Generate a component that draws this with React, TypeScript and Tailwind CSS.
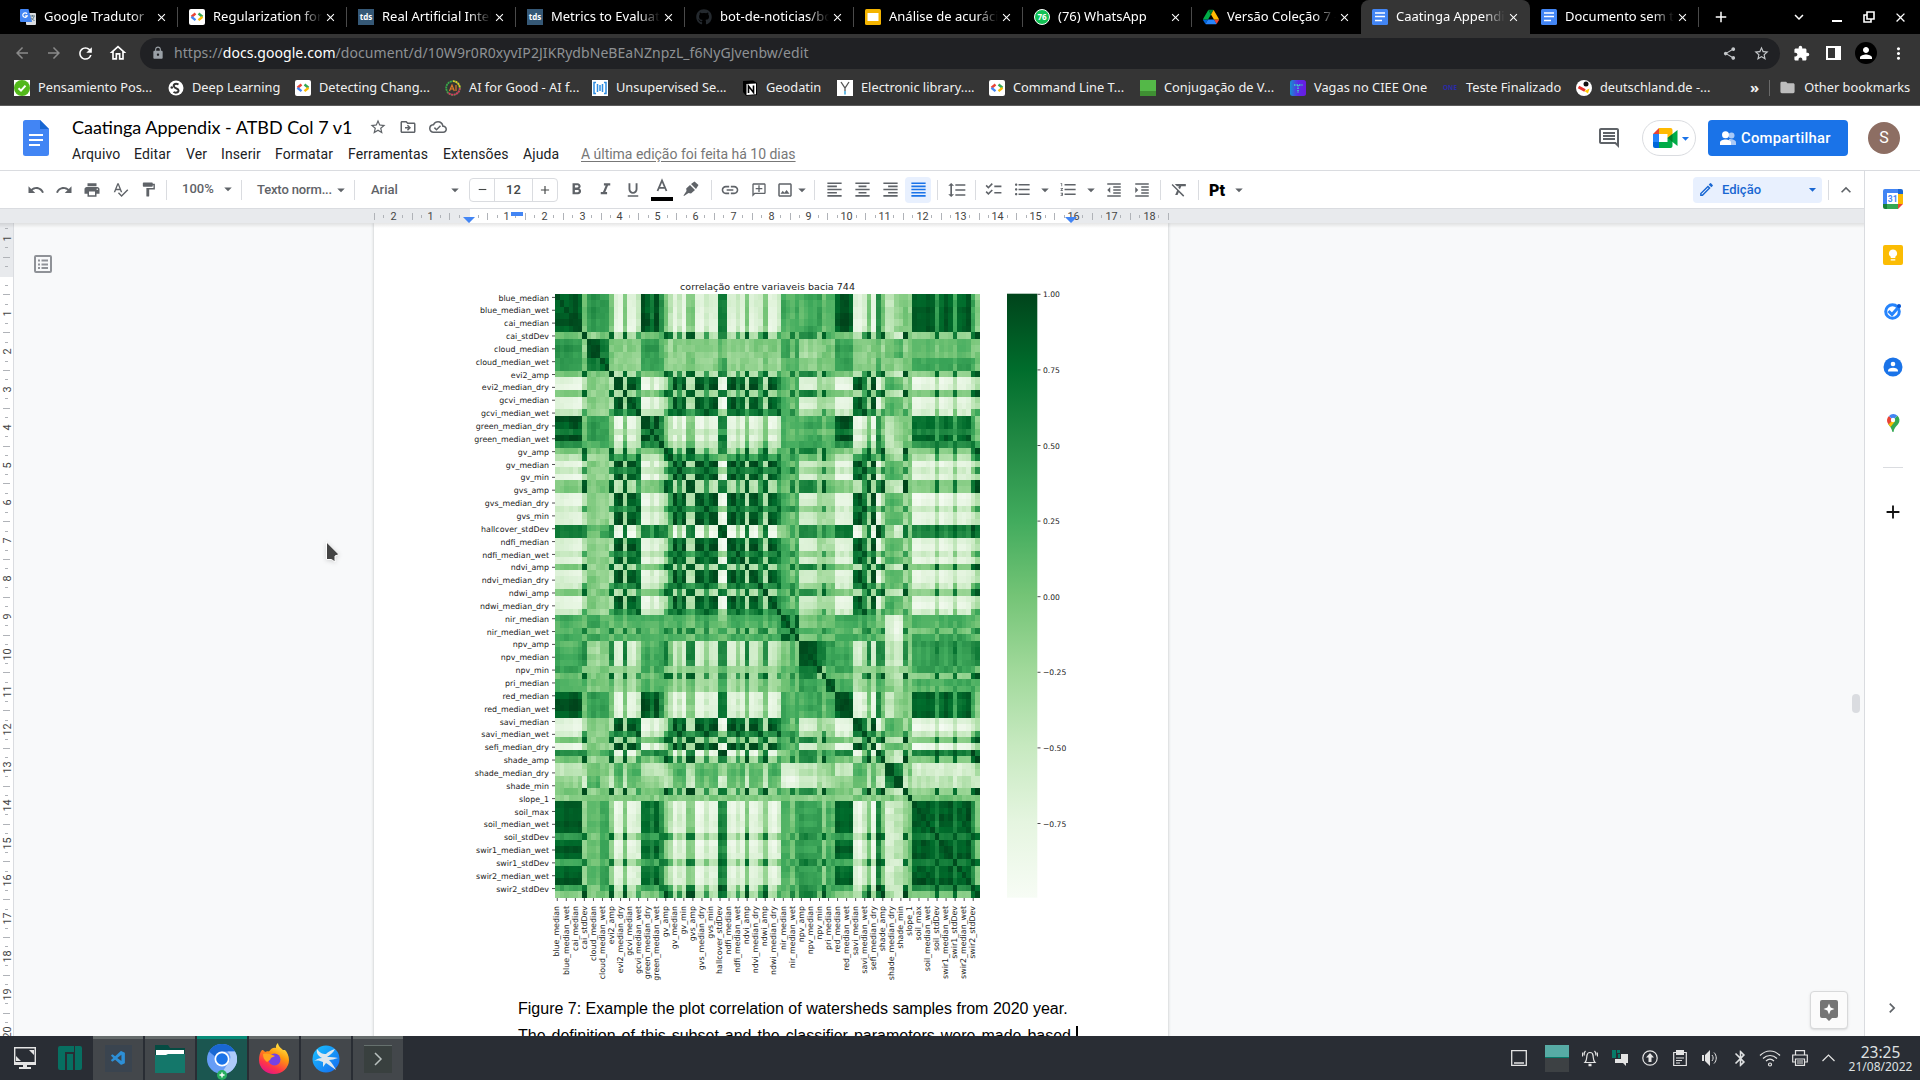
import React from "react";
import {
  MdAdd, MdArrowBack, MdArrowDropDown, MdArrowForward, MdChecklist, MdChevronRight, MdClose, MdExtension, MdFolder,
  MdFormatAlignCenter, MdFormatAlignJustify, MdFormatAlignLeft, MdFormatAlignRight, MdFormatBold, MdFormatClear,
  MdFormatIndentDecrease, MdFormatIndentIncrease, MdFormatItalic, MdFormatLineSpacing, MdFormatListBulleted,
  MdFormatListNumbered, MdFormatPaint, MdFormatUnderlined, MdInsertLink, MdKeyboardArrowDown, MdKeyboardArrowUp,
  MdLock, MdMoreVert, MdOutlineAddComment, MdOutlineCloudDone, MdOutlineDriveFileMove, MdOutlineHome, MdOutlineImage,
  MdOutlineInsertComment, MdOutlineModeEdit, MdPerson, MdPrint, MdRedo, MdRefresh, MdRemove, MdShare,
  MdSpellcheck, MdStarBorder, MdUndo, MdBluetooth,
} from "react-icons/md";
import { FaGithub } from "react-icons/fa";
import { VscVscode } from "react-icons/vsc";

/* ---------- favicons ---------- */

const Svg = ({ children, s = 16, vb = "0 0 16 16" }: { children: React.ReactNode; s?: number; vb?: string }) => (
  <svg width={s} height={s} viewBox={vb} className="shrink-0">{children}</svg>
);

const Translate = () => (
  <Svg>
    <rect x="6" y="4" width="10" height="12" rx="1" fill="#dadce0" />
    <path d="M10 7h5M12.500 6v1.500M14 7.500c-.5 2-2 3.500-3.500 4M11 8.500c.5 1.500 2 2.500 3.500 3" stroke="#5f7a86" fill="none" />
    <path d="M1 0h7.500l3.500 13H1a1 1 0 0 1-1-1V1a1 1 0 0 1 1-1z" fill="#4285f4" />
    <path d="M7 4.800A2.300 2.300 0 1 0 7.300 6.800H5.200" stroke="#fff" strokeWidth="1.200" fill="none" />
  </Svg>
);
const GDev = () => (
  <Svg>
    <rect width="16" height="16" rx="2" fill="#fff" />
    <path d="M6.500 4.500 2.500 7.800" stroke="#ea4335" strokeWidth="2.400" />
    <path d="M2.500 7.800l4 3.400" stroke="#4285f4" strokeWidth="2.400" />
    <path d="M9.500 4.500l4 3.300" stroke="#34a853" strokeWidth="2.400" />
    <path d="M13.500 7.800l-4 3.400" stroke="#fbbc04" strokeWidth="2.400" />
  </Svg>
);
const Tds = () => (
  <span className="flex h-4 w-4 shrink-0 items-center justify-center bg-[#355876] font-['Open_Sans',sans-serif] text-[8px] font-bold leading-none text-white">tds</span>
);
const Slides = () => (
  <Svg><rect width="16" height="16" rx="1.500" fill="#f4b400" /><rect x="2.500" y="4" width="11" height="8" fill="#fff" /></Svg>
);
const Whats = () => (
  <span className="flex h-4 w-4 shrink-0 items-center justify-center rounded-full border border-white bg-[#12c254] text-[8px] font-bold leading-none text-white">76</span>
);
const Drive = () => (
  <Svg vb="0 0 87.300 78">
    <path d="m6.600 66.850 3.850 6.650c.8 1.400 1.950 2.500 3.300 3.300l13.750-23.800H0c0 1.550.4 3.100 1.200 4.500z" fill="#0066da" />
    <path d="m43.650 25-13.750-23.800c-1.350.8-2.500 1.900-3.300 3.300l-25.400 44a9 9 0 0 0-1.200 4.500h27.500z" fill="#00ac47" />
    <path d="m73.550 76.800c1.350-.8 2.500-1.900 3.300-3.300l1.600-2.750 7.650-13.250c.8-1.400 1.200-2.950 1.200-4.500H59.800l5.850 11.500z" fill="#ea4335" />
    <path d="m43.650 25 13.750-23.800c-1.350-.8-2.900-1.200-4.500-1.200H34.400c-1.600 0-3.150.45-4.500 1.200z" fill="#00832d" />
    <path d="M59.800 53H27.500L13.750 76.800c1.350.8 2.900 1.200 4.500 1.200h50.800c1.600 0 3.150-.45 4.500-1.200z" fill="#2684fc" />
    <path d="m73.400 26.500-12.700-22c-.8-1.400-1.950-2.500-3.300-3.300L43.650 25 59.800 53h27.450c0-1.550-.4-3.100-1.200-4.500z" fill="#ffba00" />
  </Svg>
);
const DocFav = () => (
  <Svg>
    <rect width="16" height="16" rx="1.500" fill="#4285f4" />
    <path d="M3 4h10M3 7.500h10M3 11.500h7" stroke="#fff" strokeWidth="1.600" />
  </Svg>
);

/* ---------- browser frame ---------- */

const tabs: { icon: React.ReactNode; title: string; active?: boolean; noSep?: boolean }[] = [
  { icon: <Translate />, title: "Google Tradutor" },
  { icon: <GDev />, title: "Regularization for S" },
  { icon: <Tds />, title: "Real Artificial Intell" },
  { icon: <Tds />, title: "Metrics to Evaluate" },
  { icon: <FaGithub size={16} color="#24292e" className="shrink-0" />, title: "bot-de-noticias/bot" },
  { icon: <Slides />, title: "Análise de acurácia" },
  { icon: <Whats />, title: "(76) WhatsApp" },
  { icon: <Drive />, title: "Versão Coleção 7 -", noSep: true },
  { icon: <DocFav />, title: "Caatinga Appendix", active: true, noSep: true },
  { icon: <DocFav />, title: "Documento sem tít" },
];

const TabStrip = () => (
  <div className="flex h-[34px] items-stretch bg-black pl-[9px] text-white">
    {tabs.map((t, i) => (
      <div key={i} className={"flex w-[169px] shrink-0 items-center pl-[11px] " + (t.active ? "rounded-t-lg bg-[#353535]" : "")}>
        {t.icon}
        <span className="ml-2 w-[109px] overflow-hidden whitespace-nowrap text-[13px] [mask-image:linear-gradient(to_right,#000_80%,transparent)]">{t.title}</span>
        <MdClose size={13} className="ml-[2px] shrink-0" />
        <span className={"ml-auto h-5 w-px " + (t.noSep ? "" : "bg-[#4a4a4a]")} />
      </div>
    ))}
    <div className="flex flex-1 items-center">
      <MdAdd size={18} className="ml-[13px]" />
      <MdKeyboardArrowDown size={18} className="ml-[60px]" />
      <svg width="12" height="12" className="ml-[23px]"><path d="M1 10h10" stroke="#fff" strokeWidth="2" /></svg>
      <svg width="12" height="12" className="ml-[20px]"><path d="M4 1h7v7H4zM8 8v3H1V4h3" stroke="#fff" strokeWidth="1.600" fill="none" /></svg>
      <MdClose size={15} className="ml-[18px]" />
    </div>
  </div>
);

const AddressBar = () => (
  <div className="flex h-[38px] items-center bg-[#353535] pl-[13px] text-white">
    <MdArrowBack size={18} className="text-[#8a8a8a]" />
    <MdArrowForward size={18} className="ml-[14px] text-[#8a8a8a]" />
    <MdRefresh size={19} className="ml-[13px]" />
    <MdOutlineHome size={20} className="ml-[13px]" />
    <div className="ml-[12px] flex h-[31px] w-[1640px] items-center rounded-full bg-[#202124] pl-[11px] text-[14px] text-[#8e9194]">
      <MdLock size={14} className="text-[#9aa0a6]" />
      <span className="-mt-px ml-[9px] whitespace-nowrap tracking-[0.060px]">
        https://<span className="text-white">docs.google.com</span>/document/d/10W9r0R0xyvIP2JIKRydbNeBEaNZnpzL_f6NyGJvenbw/edit
      </span>
      <MdShare size={15} className="ml-auto text-[#c4c7ca]" />
      <MdStarBorder size={17} className="ml-4 mr-[10px] text-[#c4c7ca]" />
    </div>
    <MdExtension size={17} className="ml-[13px]" />
    <svg width="15" height="14" className="ml-[16px]"><path d="M1 1h13v12H1z" stroke="#fff" strokeWidth="2" fill="none" /><path d="M9 1h5v12H9z" fill="#fff" /></svg>
    <span className="ml-[14px] flex h-[22px] w-[22px] items-center justify-center rounded-full bg-black"><MdPerson size={18} /></span>
    <MdMoreVert size={19} className="ml-[12px]" />
  </div>
);

const bookmarks: { w: string; title: string; icon: React.ReactNode }[] = [
  { w: "w-[154px]", title: "Pensamiento Pos...", icon: <Svg><rect width="16" height="16" fill="#fff" /><circle cx="8" cy="8" r="8" fill="#52b81a" /><path d="M4.500 8.200l2.500 2.400 4.500-5" stroke="#fff" strokeWidth="2" fill="none" /></Svg> },
  { w: "w-[127px]", title: "Deep Learning", icon: <Svg><circle cx="8" cy="8" r="7.500" fill="#fff" /><path d="M10.500 4.500C8 3 5 4 6 6.500s4.500 1.500 4.500 4-3.500 2.500-5 1.500" stroke="#333" strokeWidth="2" fill="none" /><circle cx="3.800" cy="7.500" r="1.300" fill="#333" /></Svg> },
  { w: "w-[150px]", title: "Detecting Chang...", icon: <GDev /> },
  { w: "w-[147px]", title: "AI for Good - AI f...", icon: <Svg><circle cx="8" cy="8" r="6.800" fill="none" stroke="#39a949" strokeWidth="1.800" strokeDasharray="2 .6" /><path d="M8 1.200A6.800 6.800 0 0 1 14.800 8" stroke="#e6c229" strokeWidth="1.800" fill="none" strokeDasharray="2 .6" /><path d="M14.800 8A6.800 6.800 0 0 1 3 12.500" stroke="#d8345f" strokeWidth="1.800" fill="none" strokeDasharray="2 .6" /><path d="M4.500 11 7 5l2.300 6M5.500 9h3M11 5v6" stroke="#e07b28" strokeWidth="1.200" fill="none" /></Svg> },
  { w: "w-[150px]", title: "Unsupervised Se...", icon: <Svg><rect width="16" height="16" fill="#fff" /><path d="M4 2.500H2v11h2M12 2.500h2v11h-2M5.500 4v8M8 5v6M10.500 4v8" stroke="#2d8ce0" strokeWidth="1.500" fill="none" /></Svg> },
  { w: "w-[95px]", title: "Geodatin", icon: <Svg><path d="M1 1l10-.5L15 3v12l-11 .8L1 12z" fill="#000" /><path d="M4.500 4l9.500-.6v10.800L4.500 15z" fill="#fff" /><path d="M6.500 13V6l5 6.500V5.500" stroke="#000" strokeWidth="1.600" fill="none" /></Svg> },
  { w: "w-[152px]", title: "Electronic library....", icon: <Svg><rect width="16" height="16" fill="#fff" /><path d="M4 2l4 6 4-6M8 8v3" stroke="#555" strokeWidth="1.300" fill="none" /><path d="M8 11v3.500" stroke="#3aa6dd" strokeWidth="1.500" /></Svg> },
  { w: "w-[151px]", title: "Command Line T...", icon: <GDev /> },
  { w: "w-[150px]", title: "Conjugação de V...", icon: <Svg><rect width="16" height="16" fill="#54b848" /><rect y="11" width="16" height="5" fill="#3f8f33" /></Svg> },
  { w: "w-[152px]", title: "Vagas no CIEE One", icon: <Svg><defs><linearGradient id="ciee"><stop stopColor="#1590d0" /><stop offset=".5" stopColor="#5a2be8" /><stop offset="1" stopColor="#6a1be0" /></linearGradient></defs><rect width="16" height="16" rx="2.500" fill="url(#ciee)" /><path d="M4 5h8.500M8 5v8" stroke="#3ce0c0" strokeWidth="1.500" strokeDasharray="1.500 1" /></Svg> },
  { w: "w-[134px]", title: "Teste Finalizado", icon: <span className="flex h-4 w-4 shrink-0 items-center justify-center text-[6.500px] font-bold text-[#2a2aa8]">ONE</span> },
  { w: "w-[150px]", title: "deutschland.de -...", icon: <Svg><circle cx="8" cy="8" r="8" fill="#fff" /><circle cx="10" cy="4" r="2.500" fill="#111" /><path d="M2.500 7 9 10.500" stroke="#e8302a" strokeWidth="3" /><path d="M8.500 11l5-2.500-1.500 5z" fill="#fc0" /></Svg> },
];

const BookmarkBar = () => (
  <div className="flex h-[34px] items-center border-b border-[#5b5b5b] bg-[#353535] pb-[2px] pl-[14px] text-[12.800px] text-[#f1f1f1]">
    {bookmarks.map((b, i) => (
      <div key={i} className={"flex shrink-0 items-center gap-2 whitespace-nowrap " + b.w}>
        {b.icon}
        <span>{b.title}</span>
      </div>
    ))}
    <span className="ml-[24px] text-[15px] font-bold leading-none">»</span>
    <span className="ml-[10px] h-4 w-px bg-[#6a6a6a]" />
    <MdFolder size={17} className="ml-[9px] text-[#bdbdbd]" />
    <span className="ml-[8px] whitespace-nowrap">Other bookmarks</span>
  </div>
);

/* ---------- document header ---------- */

const menus: [string, string][] = [
  ["Arquivo", "w-[62px]"], ["Editar", "w-[52px]"], ["Ver", "w-[35px]"], ["Inserir", "w-[54px]"],
  ["Formatar", "w-[73px]"], ["Ferramentas", "w-[95px]"], ["Extensões", "w-[80px]"], ["Ajuda", "w-[58px]"],
];

const MeetLogo = () => (
  <svg width="25" height="20" viewBox="0 0 25 20">
    <path d="M6 0v6H0z" fill="#ea4335" />
    <path d="M6 0h11.500a2 2 0 0 1 2 2v5l-5 3V6H6z" fill="#ffba00" />
    <path d="M0 6h6v8H0z" fill="#2684fc" />
    <path d="M0 14h6v6H2a2 2 0 0 1-2-2z" fill="#0066da" />
    <path d="M6 14h8.500v-4l5 3v5a2 2 0 0 1-2 2H6z" fill="#00ac47" />
    <path d="M14.500 10 24.500 2v16z" fill="#00ac47" />
    <path d="M14.500 10l5-4v8z" fill="#00832d" />
  </svg>
);

const DocHeader = () => (
  <div className="flex h-[65px] border-b border-[#dadce0] bg-white pl-[23px]">
    <svg width="26" height="36" viewBox="0 0 26 36" className="mt-[14px]">
      <path d="M2.500 0H17l9 9v24.500a2.500 2.500 0 0 1-2.500 2.500h-21A2.500 2.500 0 0 1 0 33.500v-31A2.500 2.500 0 0 1 2.500 0z" fill="#4285f4" />
      <path d="M17 0l9 9h-9z" fill="#1967d2" />
      <path d="M6 15h14M6 20h14M6 25h11" stroke="#fff" strokeWidth="2" />
    </svg>
    <div className="ml-[23px] flex flex-col">
      <div className="mt-[9px] flex h-6 items-center">
        <span className="w-[295px] whitespace-nowrap font-['Lato',sans-serif] text-[18px] text-black">Caatinga Appendix - ATBD Col 7 v1</span>
        <MdStarBorder size={18} className="ml-[2px] text-[#5f6368]" />
        <MdOutlineDriveFileMove size={18} className="ml-[12px] text-[#5f6368]" />
        <MdOutlineCloudDone size={18} className="ml-[12px] text-[#5f6368]" />
      </div>
      <div className="mt-[5px] flex h-5 items-center whitespace-nowrap font-['Roboto',sans-serif] text-[14px] tracking-[0.120px] text-[#202124]">
        {menus.map(([m, w]) => <span key={m} className={w}>{m}</span>)}
        <span className="text-[14px] tracking-[-0.020px] text-[#777] underline underline-offset-2">A última edição foi feita há 10 dias</span>
      </div>
    </div>
    <div className="ml-auto mt-[14px] flex h-9 items-center pr-5">
      <MdOutlineInsertComment size={24} className="mr-[21px] text-[#5f6368]" />
      <div className="mr-3 flex h-9 w-[54px] items-center rounded-full border border-[#dadce0] pl-[10px]">
        <MeetLogo />
        <MdArrowDropDown size={17} className="-ml-px -mr-2 text-[#1a73e8]" />
      </div>
      <div className="mr-5 flex h-9 w-[140px] items-center rounded bg-[#1a73e8] pl-[12px] font-['Roboto',sans-serif] text-[14.800px] font-medium tracking-[0.250px] text-white">
        <svg width="16" height="14" className="mr-[5px]"><circle cx="11.500" cy="4.500" r="3" fill="#a9c9f7" /><path d="M9 8c4 0 7 1.500 7 3.500V14H9z" fill="#a9c9f7" /><circle cx="5.500" cy="3.800" r="3.500" fill="#fff" /><path d="M0 11.500C0 9.500 3 8.500 5.500 8.500S11 9.500 11 11.500V14H0z" fill="#fff" /></svg>
        Compartilhar
      </div>
      <span className="flex h-8 w-8 items-center justify-center rounded-full bg-[#8d6e63] font-['Roboto',sans-serif] text-[16px] text-white">S</span>
    </div>
  </div>
);

/* ---------- toolbar ---------- */

const Slot = ({ w, children, className = "" }: { w: string; children?: React.ReactNode; className?: string }) => (
  <div className={"flex h-[26px] shrink-0 items-center justify-center " + w + " " + className}>{children}</div>
);
const Sep = ({ w = "w-2" }: { w?: string }) => (
  <Slot w={w}><span className="h-5 w-px bg-[#dadce0]" /></Slot>
);
const Caret = () => <MdArrowDropDown size={18} className="shrink-0" />;

const Toolbar = () => (
  <div className="flex h-[38px] items-center border-b border-[#dadce0] bg-white pl-[22px] font-['Roboto',sans-serif] text-[13px] font-medium text-[#5f6368]">
    <Slot w="w-7"><MdUndo size={18} /></Slot>
    <Slot w="w-7"><MdRedo size={18} /></Slot>
    <Slot w="w-7"><MdPrint size={18} /></Slot>
    <Slot w="w-7"><MdSpellcheck size={17} /></Slot>
    <Slot w="w-[28px]"><MdFormatPaint size={17} /></Slot>
    <Sep w="w-[9px]" />
    <Slot w="w-[66px]" className="!justify-between pb-px pl-[11px]">100%<Caret /></Slot>
    <Sep />
    <Slot w="w-[104px]" className="!justify-between whitespace-nowrap pl-3 tracking-[-0.150px]">Texto norm...<Caret /></Slot>
    <Sep w="w-[10px]" />
    <Slot w="w-[110px]" className="!justify-between pl-3 pr-[5px]">Arial<Caret /></Slot>
    <div className="flex h-6 w-[89px] items-center rounded-sm border border-[#dadce0] text-[#444746]">
      <span className="flex w-[24px] justify-center"><MdRemove size={13} /></span>
      <span className="flex h-full flex-1 items-center justify-center border-x border-[#dadce0]">12</span>
      <span className="flex w-[24px] justify-center"><MdAdd size={14} /></span>
    </div>
    <Slot w="w-[36px]"><MdFormatBold size={19} /></Slot>
    <Slot w="w-[22px]"><MdFormatItalic size={19} /></Slot>
    <Slot w="w-[34px]"><MdFormatUnderlined size={18} /></Slot>
    <Slot w="w-[24px]">
      <svg width="22" height="23"><path d="M6.500 13 11 2.500 15.500 13M8 9.800h6" stroke="#5f6368" strokeWidth="1.800" fill="none" /><path d="M0 19h22v4H0z" fill="#000" /></svg>
    </Slot>
    <Slot w="w-[34px]">
      <svg width="16" height="18"><path d="M8 3l3.500-2.500 4 3.500L13 8zM7 4l5 5-4 3.500-2.500-.5L1 15l-.5-.5 3-4.500-.3-2.500z" fill="#5f6368" /></svg>
    </Slot>
    <Sep w="w-[6px]" />
    <Slot w="w-[31px]"><MdInsertLink size={20} /></Slot>
    <Slot w="w-[27px]"><MdOutlineAddComment size={16} className="-scale-x-100" /></Slot>
    <Slot w="w-[26px]"><MdOutlineImage size={18} /></Slot>
    <Slot w="w-[14px]" className="-ml-[3px]"><Caret /></Slot>
    <Sep w="w-[11px]" />
    <Slot w="w-[28px]"><MdFormatAlignLeft size={19} /></Slot>
    <Slot w="w-[28px]"><MdFormatAlignCenter size={19} /></Slot>
    <Slot w="w-[29px]"><MdFormatAlignRight size={19} /></Slot>
    <Slot w="w-[26px]" className="rounded-sm bg-[#e8f0fe] text-[#1a73e8]"><MdFormatAlignJustify size={19} /></Slot>
    <Sep w="w-[12px]" />
    <Slot w="w-[28px]"><MdFormatLineSpacing size={20} /></Slot>
    <Sep w="w-[8px]" />
    <Slot w="w-[29px]"><MdChecklist size={19} /></Slot>
    <Slot w="w-[29px]"><MdFormatListBulleted size={19} /></Slot>
    <Slot w="w-[15px]"><Caret /></Slot>
    <Slot w="w-[33px]"><MdFormatListNumbered size={19} /></Slot>
    <Slot w="w-[11px]"><Caret /></Slot>
    <Slot w="w-[35px]"><MdFormatIndentDecrease size={18} /></Slot>
    <Slot w="w-[22px]"><MdFormatIndentIncrease size={18} /></Slot>
    <Sep w="w-[14px]" />
    <Slot w="w-[24px]"><MdFormatClear size={19} /></Slot>
    <Sep w="w-[14px]" />
    <Slot w="w-[24px]" className="pt-[3px] font-['Roboto',sans-serif] text-[16px] font-black text-black">Pt</Slot>
    <Slot w="w-[20px]"><Caret /></Slot>
    <div className="ml-auto flex items-center">
      <div className="flex h-[26px] w-[129px] items-center rounded bg-[#e8f0fe] pl-[5px] pr-px text-[#1967d2]">
        <MdOutlineModeEdit size={17} />
        <span className="ml-[7px]">Edição</span>
        <MdArrowDropDown size={17} className="ml-auto" />
      </div>
      <Sep w="w-[12px]" />
      <Slot w="w-[30px]" className="pr-[6px]"><MdKeyboardArrowUp size={20} /></Slot>
    </div>
  </div>
);

/* ---------- rulers ---------- */

const CM = 37.8;
const range = (a: number, b: number) => Array.from({ length: b - a + 1 }, (_, i) => a + i);

const HRuler = () => {
  const zero = 468.2;
  return (
    <svg width="1864" height="14" className="block bg-[#e8eaed]">
      <rect x="470" width="600.500" height="14" fill="#fff" />
      {range(-10, 74).map((q) => {
        const x = Math.round(zero + (q * CM) / 4) + 0.5;
        if (q % 4 === 0) {
          return q === 0 ? null : (
            <text key={q} x={x} y="11" textAnchor="middle" fontSize="10.800" fill="#444" fontFamily="Roboto">{Math.abs(q / 4)}</text>
          );
        }
        return q % 2 === 0
          ? <path key={q} d={`M${x} 4v7`} stroke="#b0b3b8" />
          : <path key={q} d={`M${x} 6v3`} stroke="#b0b3b8" />;
      })}
      <path d="M463 8h12l-6 6zM1065 8h12l-6 6zM511 3h12v4h-12z" fill="#4285f4" />
    </svg>
  );
};

const VRuler = () => {
  const zero = 52.5;
  return (
    <svg width="14" height="813" className="block shrink-0 bg-white">
      <rect width="14" height="54" fill="#e8eaed" />
      <path d="M13.500 0v813" stroke="#dadce0" />
      {range(-5, 81).map((q) => {
        const y = Math.round(zero + (q * CM) / 4) + 0.5;
        if (q % 4 === 0) {
          return q === 0 ? null : (
            <text key={q} transform={`translate(11 ${y}) rotate(-90)`} textAnchor="middle" fontSize="10.800" fill="#444" fontFamily="Roboto">{Math.abs(q / 4)}</text>
          );
        }
        return q % 2 === 0
          ? <path key={q} d={`M3 ${y}h7`} stroke="#b0b3b8" />
          : <path key={q} d={`M5 ${y}h3`} stroke="#b0b3b8" />;
      })}
    </svg>
  );
};

/* ---------- correlation heat map ---------- */

const labels = [
  "blue_median", "blue_median_wet", "cai_median", "cai_stdDev", "cloud_median", "cloud_median_wet", "evi2_amp",
  "evi2_median_dry", "gcvi_median", "gcvi_median_wet", "green_median_dry", "green_median_wet", "gv_amp", "gv_median",
  "gv_min", "gvs_amp", "gvs_median_dry", "gvs_min", "hallcover_stdDev", "ndfi_median", "ndfi_median_wet", "ndvi_amp",
  "ndvi_median_dry", "ndwi_amp", "ndwi_median_dry", "nir_median", "nir_median_wet", "npv_amp", "npv_median", "npv_min",
  "pri_median", "red_median", "red_median_wet", "savi_median", "savi_median_wet", "sefi_median_dry", "shade_amp",
  "shade_median_dry", "shade_min", "slope_1", "soil_max", "soil_median_wet", "soil_stdDev", "swir1_median_wet",
  "swir1_stdDev", "swir2_median_wet", "swir2_stdDev",
];

/* One letter per variable: the family whose members correlate alike. */
const families =
  "AAAAAAPCCCccPVVPVVMAABAGPKVMVPPVVMVVHHVVMVPVVMPVVMNNnNQQQQqPRRAAAAVVMPVHPSSTTPLWWWWWDWWWDWWWDP";

const order = "ABGCcPVMKHNnQqRSTLWD";
/* Upper triangle of family-to-family correlations, 0 to 99. */
const table = [
  /* A */ [95, 80, 72, 70, 72, 47, 11, 22, 32, 80, 61, 58, 62, 64, 58, 27, 40, 44, 89, 64],
  /* B */ [97, 74, 66, 66, 42, 20, 28, 34, 66, 60, 54, 56, 58, 54, 30, 36, 50, 76, 62],
  /* G */ [97, 62, 62, 60, 26, 36, 44, 82, 62, 66, 70, 60, 60, 26, 32, 50, 72, 80],
  /* C */ [91, 84, 44, 44, 42, 42, 50, 60, 52, 38, 44, 46, 54, 62, 50, 56, 48],
  /* c */ [90, 45, 42, 41, 42, 62, 60, 56, 46, 52, 54, 44, 46, 50, 62, 60],
  /* P */ [96, 34, 68, 82, 80, 50, 76, 78, 48, 56, 34, 26, 46, 46, 84],
  /* V */ [95, 80, 66, 9, 60, 46, 23, 34, 32, 60, 54, 46, 10, 26],
  /* M */ [96, 84, 38, 62, 74, 38, 40, 44, 56, 46, 46, 20, 48],
  /* K */ [97, 56, 60, 76, 52, 40, 44, 42, 34, 46, 28, 62],
  /* H */ [97, 48, 58, 78, 50, 60, 36, 22, 47, 78, 94],
  /* N */ [97, 72, 50, 56, 52, 18, 8, 44, 62, 58],
  /* n */ [97, 62, 54, 58, 20, 6, 44, 52, 72],
  /* Q */ [98, 78, 66, 28, 26, 44, 68, 78],
  /* q */ [97, 60, 42, 34, 44, 66, 64],
  /* R */ [96, 44, 36, 50, 58, 64],
  /* S */ [94, 84, 44, 22, 20],
  /* T */ [98, 42, 32, 22],
  /* L */ [99, 46, 47],
  /* W */ [92, 76],
  /* D */ [97],
];
const greens = [
  [247, 252, 245], [229, 245, 224], [199, 233, 192], [161, 217, 155], [116, 196, 118],
  [65, 171, 93], [35, 139, 69], [0, 109, 44], [0, 68, 27],
];
const noise = (a: number, b: number) => {
  const s = Math.sin(a * 12.989 + b * 78.233) * 43758.545;
  return s - Math.floor(s) - 0.5;
};
const shade = (r: number, c: number) => {
  const i = Math.min(r, c);
  const j = Math.max(r, c);
  const a = order.indexOf(families[i]);
  const b = order.indexOf(families[j]);
  const lo = Math.min(a, b);
  const base = i === j ? 98 : table[lo][Math.max(a, b) - lo];
  const spread = families[i] === "W" && families[j] === "W" ? 10 : 3;
  const ja = i === j ? 0 : noise(i, b + 3) * 9 + noise(j, a + 3) * 9 + noise(i, j) * spread;
  const t = Math.max(0.02, Math.min(1, (base + ja) / 100)) * 8;
  const k = Math.min(7, Math.floor(t));
  const m = greens[k].map((v, n) => Math.round(v + (greens[k + 1][n] - v) * (t - k)));
  return `rgb(${m.join(",")})`;
};

const N = 94;
const CW = 425 / N;
const CH = 604 / N;

const Chart = () => (
  <svg width="600" height="710" viewBox="474 277 600 710" className="block" fontFamily="DejaVu Sans" fill="#222">
    <defs>
      <linearGradient id="bar" x1="0" y1="1" x2="0" y2="0">
        {greens.map((g, i) => <stop key={i} offset={i / 8} stopColor={`rgb(${g.join(",")})`} />)}
      </linearGradient>
    </defs>
    <text x="767.500" y="289.500" textAnchor="middle" fontSize="9.500" textLength="175">correlação entre variaveis bacia 744</text>
    <g shapeRendering="crispEdges">
      {range(0, N - 1).map((r) => range(0, N - 1).map((c) => (
        <rect key={r * N + c} x={555 + c * CW} y={293.7 + r * CH} width={CW + 0.2} height={CH + 0.2} fill={shade(r, c)} />
      )))}
    </g>
    {labels.map((l, i) => {
      const y = 293.7 + (2 * i + 0.5) * CH;
      const x = 555 + (2 * i + 0.5) * CW;
      return (
        <g key={l} fontSize="7.900">
          <text x="549" y={y + 3.6} textAnchor="end">{l}</text>
          <path d={`M552 ${y + 0.5}h3M${x} 898v3`} stroke="#222" strokeWidth=".8" />
          <text transform={`translate(${x + 2.2} 906) rotate(-90)`} textAnchor="end">{l}</text>
        </g>
      );
    })}
    <rect x="1007" y="293.700" width="30.300" height="604" fill="url(#bar)" />
    {["1.00", "0.75", "0.50", "0.25", "0.00", "−0.25", "−0.50", "−0.75"].map((t, i) => (
      <g key={t} fontSize="7.600">
        <path d={`M1037.500 ${294.3 + i * 75.6}h3`} stroke="#222" strokeWidth=".8" />
        <text x="1043" y={297.4 + i * 75.6}>{t}</text>
      </g>
    ))}
  </svg>
);

/* ---------- document area ---------- */

const Workspace = () => (
  <div className="relative flex h-[813px] overflow-hidden bg-[#f8f9fa]">
    <VRuler />
    <div className="w-[360px] pl-5 pt-8">
      <svg width="18" height="18"><rect x="1" y="1" width="16" height="16" rx="1" fill="none" stroke="#8f9297" strokeWidth="2" /><path d="M4 5.500h2M7.500 5.500H14M4 9.500h2M7.500 9.500H14M4 13h2M7.500 13H14" stroke="#8f9297" strokeWidth="1.800" /></svg>
    </div>
    <div className="h-[820px] w-[794px] shrink-0 bg-white shadow-[0_0_3px_rgba(60,64,67,0.300)]">
      <div className="ml-[100px] mt-[54px]"><Chart /></div>
      <div className="ml-[144px] mt-[8px] w-[553px] font-['Liberation_Sans',Arial,sans-serif] text-[16px] leading-[27px] text-black">
        <p className="whitespace-nowrap">Figure 7: Example the plot correlation of watersheds samples from 2020 year.</p>
        <p className="whitespace-nowrap [text-align-last:justify]">The definition of this subset and the classifier parameters were made based</p>
      </div>
    </div>
    <div className="absolute inset-x-0 top-0 h-[5px] bg-gradient-to-b from-black/10 to-transparent" />
    <span className="absolute left-[1076px] top-[803px] h-[18px] w-[2px] bg-black" />
    <svg width="18" height="24" className="absolute left-[323px] top-[317px] drop-shadow-sm"><path d="M3.500 2v17.500h5l3.500 2.500v-6l4-1.500z" fill="#444" stroke="#fff" /></svg>
    <span className="absolute left-[1852px] top-[471px] h-[19px] w-2 rounded-full bg-[#dadce0]" />
    <div className="absolute left-[1810px] top-[768px] flex h-[38px] w-[38px] items-center justify-center rounded border border-[#d8d9da] bg-[#fbfbfb] shadow-sm">
      <svg width="18" height="21"><path d="M2 0h14a2 2 0 0 1 2 2v14a2 2 0 0 1-2 2h-4l-3 3-3-3H2a2 2 0 0 1-2-2V2a2 2 0 0 1 2-2z" fill="#757575" /><path d="M9 3.500l1.600 3.900 3.900 1.600-3.900 1.600L9 14.500l-1.600-3.900L3.500 9l3.900-1.600z" fill="#fff" /></svg>
    </div>
  </div>
);

const SidePanel = () => (
  <div className="flex w-[56px] shrink-0 flex-col items-center border-l border-[#dadce0] bg-white pt-[18px]">
    <div className="flex flex-col items-center gap-9">
      <svg width="20" height="20"><path d="M2 0h13v4H4v11H0V2a2 2 0 0 1 2-2z" fill="#4285f4" /><path d="M15 0h3a2 2 0 0 1 2 2v3h-5z" fill="#1967d2" /><path d="M15 5h5v10h-5z" fill="#fbbc04" /><path d="M4 15h11v5H4z" fill="#34a853" /><path d="M0 15h4v5H2a2 2 0 0 1-2-2z" fill="#188038" /><path d="M15 15h5l-5 5z" fill="#ea4335" /><path d="M4 4h11v11H4z" fill="#fff" /><text x="9.700" y="12.700" fontSize="8.500" fontWeight="700" textAnchor="middle" fill="#4285f4" fontFamily="Roboto">31</text></svg>
      <svg width="20" height="20"><rect width="20" height="20" rx="2" fill="#fbbc04" /><path d="M10 4.500a4 4 0 0 1 2.300 7.300V13H7.700v-1.200A4 4 0 0 1 10 4.500zM7.700 14.200h4.600v1.300H7.700z" fill="#fff" /></svg>
      <svg width="20" height="20"><circle cx="9.500" cy="10.500" r="6.800" fill="none" stroke="#2684fc" strokeWidth="3" /><path d="M5.500 10l3.500 3.500 8-9" stroke="#2684fc" strokeWidth="3" fill="none" /><circle cx="16" cy="5" r="2" fill="#0c57d0" /></svg>
      <svg width="20" height="20"><circle cx="10" cy="10" r="9.500" fill="#1a73e8" /><circle cx="10" cy="7" r="2.300" fill="#fff" /><path d="M5 14.500v-1c0-1.700 2.300-2.800 5-2.800s5 1.100 5 2.800v1z" fill="#fff" /></svg>
      <svg width="20" height="20"><path d="M4 7a6.200 6.200 0 0 1 2-4l4 4-4 5C4.800 10.500 4 9 4 7z" fill="#ea4335" /><path d="M6 3a6 6 0 0 1 8.500-.3L10 7z" fill="#4285f4" /><path d="M5.500 11.500 14.500 2.700a6 6 0 0 1 .8 8C13.500 13.500 11.500 14 10.500 19h-1C8.500 15 7 13.500 5.500 11.500z" fill="#34a853" /><path d="M5.500 11.500 10 7l2 1.500-4.500 5.500z" fill="#fbbc04" /><circle cx="10" cy="7" r="2.200" fill="#fff" /></svg>
    </div>
    <span className="mt-[34px] h-px w-5 bg-[#dadce0]" />
    <MdAdd size={22} className="mt-[33px] text-[#111]" />
    <MdChevronRight size={20} className="mb-[18px] mr-px mt-auto text-[#5f6368]" />
  </div>
);

/* ---------- desktop panel ---------- */

const Task = ({ active, children }: { active?: boolean; children: React.ReactNode }) => (
  <div className={"mr-[2px] flex h-11 w-[50px] items-center justify-center border-t-[3px] pb-[2px] " + (active ? "border-[#078c78] bg-[#1b5650]" : "border-[#656b6b] bg-[#43474b]")}>
    {children}
  </div>
);

const TrayCell = ({ children, w = "w-[30px]" }: { children: React.ReactNode; w?: string }) => (
  <span className={"flex shrink-0 items-center justify-center " + w}>{children}</span>
);

const Panel = () => (
  <div className="flex h-11 items-center bg-[#292d34] text-[#dfe1e2]">
    <svg width="22" height="22" className="ml-[14px]"><path d="M.7.700h20.600v15.500H.7z" stroke="#e4e4e4" strokeWidth="1.400" fill="none" /><path d="M0 15h22v3H0zM9 18h4v2h4v2H5v-2h4zM15 3h5v5zM2 9v5h5z" fill="#e4e4e4" /></svg>
    <svg width="24" height="24" className="ml-[22px] mr-[11px]"><path d="M2 0h14v6H7v18H2a2 2 0 0 1-2-2V2a2 2 0 0 1 2-2zM9 8h6v16H9zM17 0h5a2 2 0 0 1 2 2v20a2 2 0 0 1-2 2h-5z" fill="#076f61" /></svg>
    <Task><span className="flex h-[27px] w-[27px] items-center justify-center bg-[#3a444f]"><VscVscode size={17} color="#2d8fd6" /></span></Task>
    <Task>
      <svg width="30" height="28"><path d="M0 0h13l2 3h15v7H0z" fill="#054b42" /><path d="M1 5h28v5H1z" fill="#fff" /><path d="M0 10h11l2-1h17v19H0z" fill="#14776a" /></svg>
    </Task>
    <Task active>
      <span className="relative h-[30px]">
        <svg width="30" height="30" viewBox="0 0 30 30"><circle cx="15" cy="15" r="15" fill="#669df6" /><path d="M2 7.500A15 15 0 0 1 28 7.500H15a7.500 7.500 0 0 0-7 5z" fill="#1967d2" /><path d="M28 7.500A15 15 0 0 1 14 30l7.500-11.500a7.500 7.500 0 0 0-1-11z" fill="#aecbfa" /><circle cx="15" cy="15" r="7.500" fill="#fff" /><circle cx="15" cy="15" r="5.800" fill="#1a73e8" /></svg>
        <svg width="10" height="10" className="absolute -bottom-[6px] left-[10px]"><circle cx="5" cy="5" r="5" fill="#27ae60" /><path d="M5 2.500v5M2.500 5h5" stroke="#fff" strokeWidth="1.400" /></svg>
      </span>
    </Task>
    <Task>
      <svg width="30" height="31" viewBox="0 0 30 31">
        <defs><linearGradient id="fox" x1=".8" y1="0" x2=".3" y2="1"><stop stopColor="#fff44f" /><stop offset=".4" stopColor="#ff980e" /><stop offset=".75" stopColor="#ff3647" /><stop offset="1" stopColor="#e31587" /></linearGradient></defs>
        <path d="M3 7c1 0 2 .5 3 2 1-.6 3-.8 4-.6C12 6 14 4 17 5c-.5-2 .5-4 2-5 0 3 3 5 5 7 1-.3 1.500.3 2 0 2 2 4 6 4 10a15 14 0 0 1-30 0C0 13 1 9 3 7z" fill="url(#fox)" />
        <circle cx="15.500" cy="16.500" r="6" fill="#7542e5" />
        <path d="M4 11c4-1 7 0 12 2-1 1-3 1-4 2-1 3-3 3-4 4-3-2-4-5-4-8z" fill="#ffa51f" />
      </svg>
    </Task>
    <Task>
      <svg width="28" height="28"><defs><linearGradient id="kr" x1="0" y1="0" x2="1" y2="1"><stop stopColor="#19c3ff" /><stop offset="1" stopColor="#1568f0" /></linearGradient></defs><circle cx="14" cy="14" r="13.500" fill="url(#kr)" /><path d="M5 4c3 4 5 5 9 5 2-2 5-4 9-5-2 4-5 6-8 8 4 0 7 0 11 1-4 1-6 2-9 2 3 3 5 6 7 10-4-3-7-5-10-7l-3 4 0-5c-3-1-5-2-9-1 3-2 5-3 8-3-4-2-6-5-5-9z" fill="#dfe7ee" /></svg>
    </Task>
    <Task><svg width="28" height="28"><rect width="28" height="28" fill="#39403f" /><path d="M0 .5h28" stroke="#66706e" /><path d="M11 8l6 6-6 6" stroke="#b9c0bf" strokeWidth="1.500" fill="none" /></svg></Task>
    <div className="ml-auto flex h-full items-center">
      <TrayCell w="w-[16px]"><svg width="16" height="16"><path d="M.7.700h14.600v14.600H.7zM3 13h10" stroke="#e4e4e4" strokeWidth="1.300" fill="none" /></svg></TrayCell>
      <span className="ml-[18px] mr-[6px] flex h-[27px] w-[24px] flex-col"><span className="h-[13px] border-b border-[#067a69] bg-[#57aba5]" /><span className="h-[14px] bg-[#3d4144]" /></span>
      <TrayCell><svg width="16" height="17" fill="none" stroke="#e4e4e4" strokeWidth="1.200"><path d="M3 12.500c2-2 1.500-5 2-7a3 3 0 0 1 6 0c.5 2 0 5 2 7zM1 2.500C.3 4 .3 5 .5 6.500M3.500 1C2 2.500 2 4 2.200 5.500M15 2.500c.7 1.500.7 2.500.5 4M12.500 1C14 2.500 14 4 13.800 5.500" /><path d="M6.500 15h3" strokeWidth="2.500" /></svg></TrayCell>
      <TrayCell><svg width="16" height="16"><path d="M0 0h4v8H0zM5 0h3v3H5zM6 4h2v4H6z" fill="#077a68" /><path d="M9 4h7v9h-2v3l-3-3H3V9h6z" fill="#e4e4e4" /></svg></TrayCell>
      <TrayCell><svg width="16" height="16"><circle cx="8" cy="8" r="7.200" stroke="#e4e4e4" strokeWidth="1.200" fill="none" /><path d="M8 3l4 4.500H9.500V12h-3V7.500H4z" fill="#e4e4e4" /></svg></TrayCell>
      <TrayCell><svg width="14" height="16"><path d="M.7 2.500h12.600v13H.7zM3 8h8M3 10.500h6M3 13h4" stroke="#e4e4e4" strokeWidth="1.200" fill="none" /><path d="M3 0h8v5H3z" fill="#e4e4e4" /></svg></TrayCell>
      <TrayCell><svg width="17" height="16"><path d="M0 5h2v6H0zM3 5l5-5v16l-5-5z" fill="#e4e4e4" /><path d="M10 5c1.500 2 1.500 4 0 6M12 2.500c3 3 3 8 0 11" stroke="#e4e4e4" fill="none" /></svg></TrayCell>
      <TrayCell><MdBluetooth size={19} /></TrayCell>
      <TrayCell><svg width="22" height="17" fill="none" stroke="#e4e4e4" strokeWidth="1.200"><path d="M1 5.500c6-6 14-6 20 0M4 8.500c4-4 10-4 14 0M7 11c2.500-2.300 5.500-2.300 8 0" /><circle cx="11" cy="14.500" r="1.500" /></svg></TrayCell>
      <TrayCell><svg width="16" height="16" fill="none" stroke="#e4e4e4" strokeWidth="1.200"><path d="M3.500 5V.700h9V5M3 12H.7V5h14.600v7H13M3.500 9h9v6.300h-9zM5 11h6M5 13h6" /></svg></TrayCell>
      <TrayCell w="w-[27px]"><svg width="13" height="8"><path d="M.5 7l6-6 6 6" stroke="#e4e4e4" strokeWidth="1.200" fill="none" /></svg></TrayCell>
      <div className="flex w-[78px] flex-col items-center whitespace-nowrap pl-px pr-[2px] leading-none">
        <span className="text-[15.500px] leading-[16px]">23:25</span>
        <span className="text-[12px] leading-[13px]">21/08/2022</span>
      </div>
    </div>
  </div>
);

export default function App() {
  return (
    <div className="flex h-[1080px] w-[1920px] flex-col overflow-hidden bg-white font-['Noto_Sans',sans-serif]">
      <TabStrip />
      <AddressBar />
      <BookmarkBar />
      <DocHeader />
      <div className="flex h-[865px]">
        <div className="flex w-[1864px] flex-col">
          <Toolbar />
          <HRuler />
          <Workspace />
        </div>
        <SidePanel />
      </div>
      <Panel />
    </div>
  );
}
